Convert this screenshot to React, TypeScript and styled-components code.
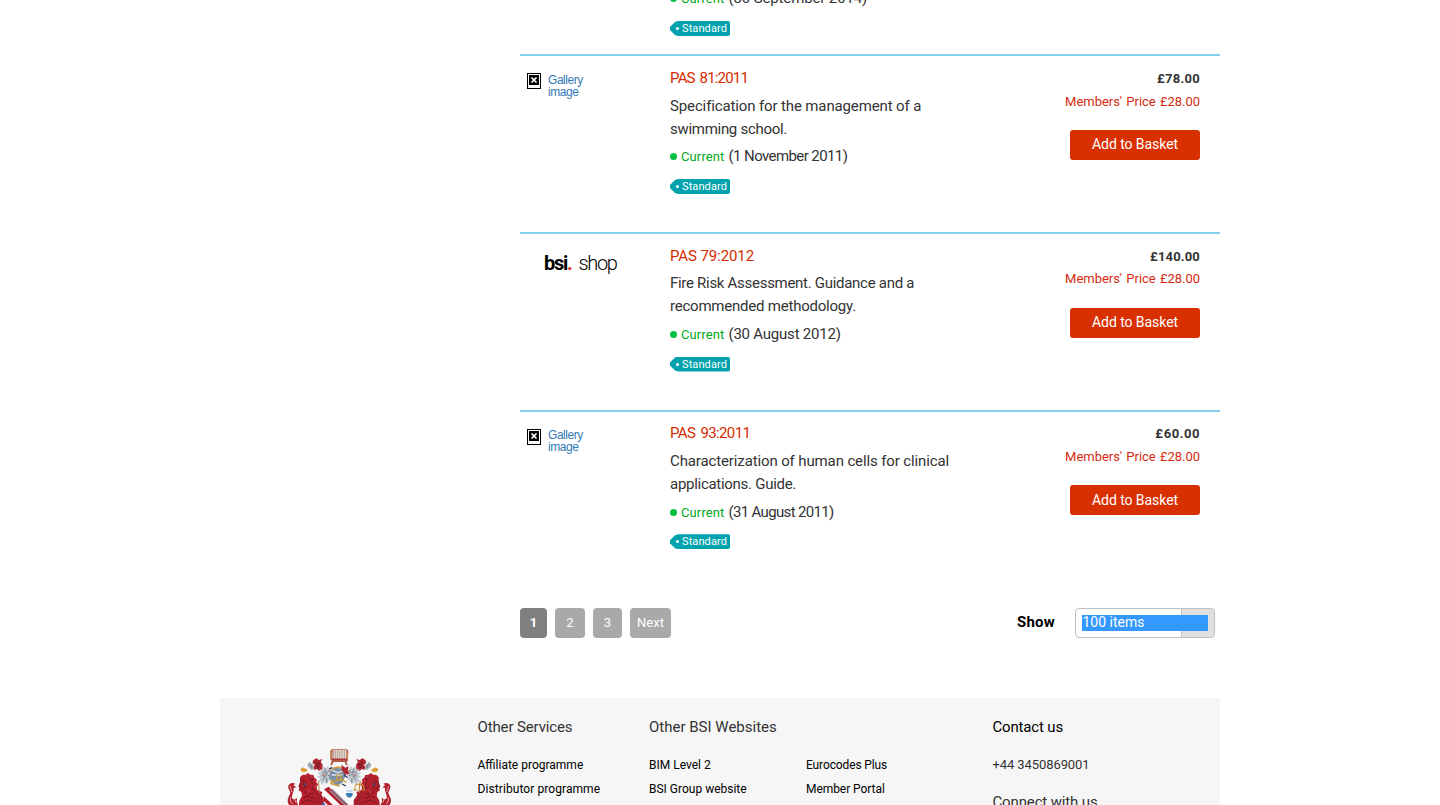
import React from "react";
import styled, { createGlobalStyle } from "styled-components";

const GlobalStyle = createGlobalStyle`
  *, *::before, *::after { box-sizing: border-box; }
  body {
    margin: 0;
    background: #fff;
    color: #333;
    font-family: Roboto, "Liberation Sans", sans-serif;
    font-size: 15px;
    line-height: 23px;
  }
  a { color: inherit; text-decoration: none; }
`;

const Page = styled.div`
  width: 1440px;
  height: 805px;
  padding: 0 220px;
  overflow: hidden;
  display: flex;
  flex-direction: column;
`;

const Results = styled.main`
  width: 700px;
  height: 698px;
  flex: none;
  margin-left: 300px;
  display: flex;
  flex-direction: column;
`;

const Tracked = styled.span<{ $track?: number }>`
  letter-spacing: ${(p) => p.$track ?? 0}px;
  white-space: nowrap;
`;

const PreviousRow = styled.div`
  height: 54.2px;
  flex: none;
  padding-left: 150px;
  overflow: hidden;
  display: flex;
  flex-direction: column;
  align-items: flex-start;
  justify-content: flex-end;
  padding-bottom: 18.2px;
`;

const Row = styled.article`
  height: 177.67px;
  flex: none;
  display: grid;
  grid-template-columns: 150px 1fr auto;
  border-top: 2px solid #87ceeb;
  padding: 10.7px 20px 0 0;
`;

const Thumb = styled.a`
  display: flex;
  align-items: flex-start;
  gap: 7px;
  padding: 6.4px 0 0 7px;
  color: #337ab7;
  font-family: "Liberation Sans", Arial, sans-serif;
  font-size: 12px;
  line-height: 12px;
  letter-spacing: -0.45px;
`;

const BrokenIcon = styled.svg`
  width: 14px;
  height: 16px;
  flex: none;
`;

const ThumbLabel = styled.span`
  width: 40px;
  padding-top: 0.8px;
`;

const Logo = styled.a`
  display: flex;
  align-items: baseline;
  padding: 6px 0 0 24px;
  height: 34px;
  color: #000;
  font-size: 20px;
  line-height: 24px;
`;

const LogoMark = styled.span`
  font-weight: 700;
  letter-spacing: -1.3px;
`;

const LogoDot = styled.span`
  color: #e2231a;
`;

const LogoWord = styled.span`
  margin-left: 7px;
  font-weight: 300;
  letter-spacing: -1.3px;
`;

const Title = styled.a<{ $gap?: number }>`
  display: block;
  color: #d52b00;
  word-spacing: ${(p) => p.$gap ?? 0}px;
`;

const Description = styled.p`
  margin: 4.7px 0;
`;

const Line = styled.span`
  display: block;
`;

const Status = styled.div`
  display: flex;
  align-items: center;
  height: 23px;
`;

const StatusDot = styled.span`
  width: 7px;
  height: 7px;
  margin-right: 4px;
  border-radius: 50%;
  background: #00c040;
`;

const StatusName = styled.span`
  width: 47.5px;
  color: #00a81c;
  font-size: 13px;
  letter-spacing: 0.12px;
`;

const TagBox = styled.div`
  width: 60px;
  height: 15px;
  margin-top: 10.7px;
  flex: none;
  display: flex;
  align-items: center;
  gap: 3px;
  padding-left: 6px;
  background: #00a3ad;
  border-radius: 0 2px 2px 0;
  clip-path: polygon(0 6px, 5px 1px, 8px 0, 100% 0, 100% 100%, 8px 100%, 5px 14px, 0 9px);
  color: #fff;
  font-size: 11px;
  line-height: 15px;
  letter-spacing: 0.1px;
  &::before {
    content: "";
    width: 3px;
    height: 3px;
    border-radius: 50%;
    background: #fff;
  }
`;

const Prices = styled.div`
  display: flex;
  flex-direction: column;
  align-items: flex-end;
  font-size: 13px;
`;

const Price = styled.strong`
  height: 22.7px;
  font-weight: 700;
`;

const MemberPrice = styled.span`
  color: #d52b10;
  height: 23px;
  word-spacing: 1px;
  letter-spacing: -0.02px;
`;

const BasketButton = styled.button`
  width: 130px;
  height: 30px;
  margin-top: 17.4px;
  padding: 0;
  border: 0;
  border-radius: 3px;
  background: #d83000;
  color: #fff;
  font: 14px/29px Roboto, sans-serif;
  letter-spacing: -0.06px;
`;

const Controls = styled.div`
  display: flex;
  align-items: center;
  justify-content: space-between;
  height: 30px;
  margin-top: 20.8px;
  padding-right: 5px;
`;

const Pager = styled.nav`
  display: flex;
  gap: 8px;
`;

const PageLink = styled.a<{ $width: number; $active?: boolean }>`
  width: ${(p) => p.$width}px;
  height: 30px;
  border-radius: 4px;
  background: ${(p) => (p.$active ? "#808080" : "#a9a9a9")};
  color: #fff;
  font-size: 13px;
  font-weight: ${(p) => (p.$active ? 700 : 400)};
  line-height: 29px;
  text-align: center;
`;

const ShowGroup = styled.label`
  display: flex;
  align-items: center;
  gap: 20px;
  color: #000;
`;

const ShowLabel = styled.strong`
  letter-spacing: 0.22px;
`;

const SelectBox = styled.span`
  width: 140px;
  height: 30px;
  padding: 6px;
  border: 1px solid #c0c0c0;
  border-radius: 4px;
  background: linear-gradient(to right, #fff 105px, #c4c4c4 105px, #c4c4c4 106px, #e0e0e0 106px);
`;

const Selected = styled.span`
  display: block;
  height: 16px;
  background: #3399ff;
  padding-left: 0.5px;
  color: #fff;
  font-size: 14px;
  line-height: 15px;
`;

const Footer = styled.footer`
  height: 107px;
  flex: none;
  overflow: hidden;
  display: grid;
  grid-template-columns: 207.5px 171.5px 157px 186.5px auto;
  padding-left: 50px;
  background: #f6f6f6;
`;

const Crest = styled.svg`
  width: 140px;
  height: 70px;
  margin-top: 37.5px;
`;

const Column = styled.div`
  display: flex;
  flex-direction: column;
  padding-top: 17.5px;
`;

const Heading = styled.h4<{ $dark?: boolean; $track?: number }>`
  height: 23px;
  margin: 0 0 14px;
  color: ${(p) => (p.$dark ? "#000" : "#333")};
  font-size: 15px;
  font-weight: 400;
  letter-spacing: ${(p) => p.$track ?? 0}px;
  white-space: nowrap;
`;

const FooterLink = styled.a<{ $track?: number }>`
  height: 24px;
  color: #000;
  font-size: 12px;
  line-height: 24px;
  letter-spacing: ${(p) => p.$track ?? 0}px;
  white-space: nowrap;
`;

const Phone = styled.span`
  height: 24px;
  margin-bottom: 14px;
  font-size: 13px;
  line-height: 24px;
  letter-spacing: -0.09px;
`;

type Text = [string, number];

interface Item {
  title: Text;
  gap?: number;
  lines: Text[];
  date: Text;
  price: Text;
  logo?: boolean;
}

const items: Item[] = [
  {
    title: ["PAS 81:2011", -0.82],
    gap: 2,
    lines: [["Specification for the management of a", -0.13], ["swimming school.", -0.29]],
    date: ["(1 November 2011)", -0.59],
    price: ["£78.00", 0.28],
  },
  {
    title: ["PAS 79:2012", -0.1],
    lines: [["Fire Risk Assessment. Guidance and a", -0.29], ["recommended methodology.", -0.22]],
    date: ["(30 August 2012)", -0.22],
    price: ["£140.00", 0.17],
    logo: true,
  },
  {
    title: ["PAS 93:2011", -0.62],
    gap: 2,
    lines: [["Characterization of human cells for clinical", -0.125], ["applications. Guide.", -0.28]],
    date: ["(31 August 2011)", -0.66],
    price: ["£60.00", 0.55],
  },
];

const StatusLine = ({ date }: { date: Text }) => (
  <Status>
    <StatusDot />
    <StatusName>Current</StatusName>
    <Tracked $track={date[1]}>{date[0]}</Tracked>
  </Status>
);

const GalleryImage = () => (
  <Thumb href="#">
    <BrokenIcon viewBox="0 0 14 16">
      <rect x="0.5" y="0.5" width="13" height="15" fill="#fff" stroke="#000" />
      <rect x="2" y="2" width="10" height="10" fill="#000" />
      <path d="M4.5 4.5 9.5 9.5M9.5 4.5 4.5 9.5" stroke="#fff" strokeWidth="1.7" />
    </BrokenIcon>
    <ThumbLabel>Gallery image</ThumbLabel>
  </Thumb>
);

const Supporter = () => (
  <g>
    {/* lion's mane, body and tail */}
    <path
      d="M90 124l8-8 8 1 7-6 8 5 9 1 3 8 7 5-1 9 5 6-4 8 1 8 7 4 9 3-3 9 10 14 1 23H86l2-20 8-14-2-12-8-5 2-7-3-6 5-5z"
      fill="#b3202c"
    />
    <path d="M92 138l8-4 4 5-5 6 7 5-4 8-10-3-4-7zM112 122l8 6 9 2-4 8 7 8-5 8 6 12M104 166l12 8 14-2M100 186l14-6 20 8M96 200l18-8 24 8" fill="none" stroke="#741722" strokeWidth="3" />
    <path d="M110 120l5 5M126 120l-6 8M136 134l-9 3M140 150l-11 0M118 160l-4 14" stroke="#d8545b" strokeWidth="2" />
    <path
      d="M60 210c-8-9-9-19-4-27 2-8 8-11 3-18-4-7-7-15 0-21 4-4 11-4 17-1l-6 5 9 6-9 2c4 7-2 14-3 20-3 9-1 13 7 14l7-4-1 10 5 14z"
      fill="#b3202c"
    />
    <path d="M62 150c-4 6 3 11 4 18M62 184c-3 9 0 15 6 20M73 188l5 12" fill="none" stroke="#f0c8c8" strokeWidth="2.5" />
    <circle cx="105" cy="145" r="3.5" fill="#394f87" />
    {/* winged beast beside the helm */}
    <path d="M130 72l9-5 8 5 10-3-5 9 6 8-1 14-9 5-8-6-7 3-4-10 6-5-8-7z" fill="#ad2632" />
    <path d="M136 76l8 7-5 8 9 5M150 79l-5 16" fill="none" stroke="#661622" strokeWidth="2.5" />
    <path d="M113 84l7-7 4 7 7 1-3 6 5 8-9 4-3-7-8-3z" fill="#a7afba" />
    <path d="M118 84l8 6-5 8" fill="none" stroke="#576171" strokeWidth="2" />
    <path d="M91 99l8-5 4 3 7 1 2 7-8 4-9-1z" fill="#e4aa3d" />
    <path d="M93 102l8-3 8 4" fill="none" stroke="#a86c20" strokeWidth="1.5" />
    <path
      d="M160 91l7 6 7-7 3 9 8 4-6 8 8 8-8 5 5 8-9 4-5 9-7-6-7 8-4-9-7-1 6-9-9-5 8-6-9-6 11-3-4-8 9 1z"
      fill="#c4cad2"
    />
    <path d="M164 98l4 11-11-1M176 106l-9 7 12 7M155 119l11 2-8 12M170 126l1 14" fill="none" stroke="#606c7c" strokeWidth="2.5" />
    <path d="M176 101l8 12M157 113l11 6" stroke="#b32733" strokeWidth="2" />
    <path d="M145 134l4 44" stroke="#bc8a4d" strokeWidth="3" />
    <path d="M137 167l14 4 6 16 8 5v18h-20l-5-20z" fill="#a71f2d" />
  </g>
);

const CoatOfArms = () => (
  <Crest viewBox="0 0 420 210">
    <Supporter />
    <g transform="translate(416 0) scale(-1 1)">
      <Supporter />
    </g>
    {/* shield */}
    <path d="M160 153h90v57h-88z" fill="#fafafa" />
    <path d="M162 160l14-8 62 58h-24zM161 180l31 30h-15l-16-15z" fill="#b3202c" />
    <path d="M178 162l47 45M186 160l48 47" stroke="#8e96a3" strokeWidth="4" />
    <path d="M227 154h22v27h-7l-7-5z" fill="#edf3f8" />
    <path d="M228 171h20c1 8-4 14-10 14s-11-6-10-14z" fill="#367fb9" />
    <path d="M229 165h18" stroke="#9ac3df" strokeWidth="3" />
    <circle cx="160" cy="205" r="5" fill="#3260a0" />
    {/* helm */}
    <path d="M183 103l12-7 20 1 10 8 1 16-9 19-16 9-17-11-7-14z" fill="#7d8fa5" />
    <path d="M187 103l17 7 17-6M185 117h32" fill="none" stroke="#d7e0e8" strokeWidth="4" />
    <path d="M187 139l27-9 15 9M187 131l-5 12 27 7M200 115l2 16M211 112l1 18M180 99l24-6 20 5" fill="none" stroke="#d09a35" strokeWidth="4" />
    <path d="M214 86l12 9 10-4-3 14 7 8-14 3-10-12z" fill="#af2633" />
    <path d="M178 99l8-5M222 117l11 8M216 144l12 6" stroke="#293b62" strokeWidth="4" />
    {/* crown block */}
    <path d="M181 44l4-4h45l5 4-1 30-4 3 3 11h-5l-4-10h-33l-5 10h-5l4-14-4-4z" fill="#b55c4b" />
    <path d="M188 42h41v28h-42z" fill="#e9dfd5" />
    <path d="M191 42v27M197 43v24M203 42v27M209 43v25M216 42v27M223 43v25" stroke="#866a66" strokeWidth="1.8" />
    <path d="M184 70h48" stroke="#ab3436" strokeWidth="5" />
    <path d="M183 47v23M232 47v23" stroke="#ca9155" strokeWidth="3" />
    {/* scales */}
    <path d="M256 145h24M268 141v18M258 146l-5 15M279 146l4 15M250 162h13M275 162h11" fill="none" stroke="#c9902e" strokeWidth="3" />
  </Crest>
);

export default function App() {
  return (
    <>
      <GlobalStyle />
      <Page>
        <Results>
          <PreviousRow>
            <StatusLine date={["(30 September 2014)", -0.13]} />
            <TagBox>Standard</TagBox>
          </PreviousRow>
          {items.map((item) => (
            <Row key={item.title[0]}>
              {item.logo ? (
                <Logo href="#">
                  <LogoMark>
                    bsi<LogoDot>.</LogoDot>
                  </LogoMark>
                  <LogoWord>shop</LogoWord>
                </Logo>
              ) : (
                <GalleryImage />
              )}
              <div>
                <Title href="#" $gap={item.gap}>
                  <Tracked $track={item.title[1]}>{item.title[0]}</Tracked>
                </Title>
                <Description>
                  {item.lines.map(([text, track]) => (
                    <Line key={text}>
                      <Tracked $track={track}>{text}</Tracked>
                    </Line>
                  ))}
                </Description>
                <StatusLine date={item.date} />
                <TagBox>Standard</TagBox>
              </div>
              <Prices>
                <Price>
                  <Tracked $track={item.price[1]}>{item.price[0]}</Tracked>
                </Price>
                <MemberPrice>Members' Price £28.00</MemberPrice>
                <BasketButton>Add to Basket</BasketButton>
              </Prices>
            </Row>
          ))}
          <Controls>
            <Pager>
              <PageLink $width={27} $active>1</PageLink>
              <PageLink $width={30}>2</PageLink>
              <PageLink $width={29}>3</PageLink>
              <PageLink $width={41}>Next</PageLink>
            </Pager>
            <ShowGroup>
              <ShowLabel>Show</ShowLabel>
              <SelectBox>
                <Selected>100 items</Selected>
              </SelectBox>
            </ShowGroup>
          </Controls>
        </Results>
        <Footer>
          <CoatOfArms />
          <Column>
            <Heading $track={-0.13}>Other Services</Heading>
            <FooterLink>Affiliate programme</FooterLink>
            <FooterLink $track={0.08}>Distributor programme</FooterLink>
          </Column>
          <Column>
            <Heading>Other BSI Websites</Heading>
            <FooterLink>BIM Level 2</FooterLink>
            <FooterLink>BSI Group website</FooterLink>
          </Column>
          <Column>
            <Heading />
            <FooterLink $track={-0.12}>Eurocodes Plus</FooterLink>
            <FooterLink $track={-0.06}>Member Portal</FooterLink>
          </Column>
          <Column>
            <Heading $dark $track={-0.17}>Contact us</Heading>
            <Phone>+44 3450869001</Phone>
            <Heading $track={-0.14}>Connect with us</Heading>
          </Column>
        </Footer>
      </Page>
    </>
  );
}
